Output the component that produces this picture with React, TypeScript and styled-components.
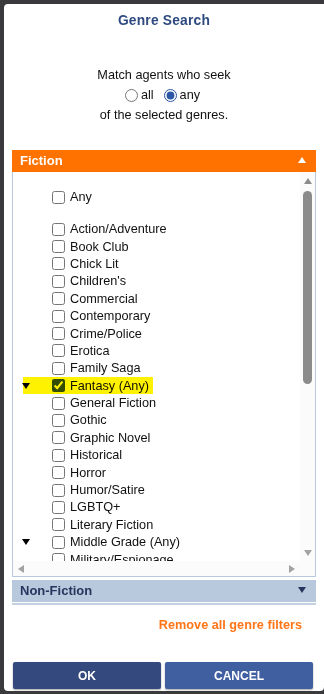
import React from "react";
import styled, { createGlobalStyle } from "styled-components";

const GlobalStyle = createGlobalStyle`
  html, body {
    margin: 0;
    padding: 0;
    background: #3a3a3c;
  }
  body {
    font-family: "Liberation Sans", Arial, sans-serif;
  }
`;

const fictionGenres: { name: string; caret?: boolean; checked?: boolean; marked?: boolean }[] = [
  { name: "Action/Adventure" },
  { name: "Book Club" },
  { name: "Chick Lit" },
  { name: "Children's" },
  { name: "Commercial" },
  { name: "Contemporary" },
  { name: "Crime/Police" },
  { name: "Erotica" },
  { name: "Family Saga" },
  { name: "Fantasy (Any)", caret: true, checked: true, marked: true },
  { name: "General Fiction" },
  { name: "Gothic" },
  { name: "Graphic Novel" },
  { name: "Historical" },
  { name: "Horror" },
  { name: "Humor/Satire" },
  { name: "LGBTQ+" },
  { name: "Literary Fiction" },
  { name: "Middle Grade (Any)", caret: true },
  { name: "Military/Espionage" },
];

const Arrow = ({ dir, color = "#a3a3a3" }: { dir: "up" | "down" | "left" | "right"; color?: string }) => {
  const pts = {
    up: "0,6 4,0 8,6",
    down: "0,0 8,0 4,6",
    left: "6,0 6,8 0,4",
    right: "0,0 6,4 0,8",
  }[dir];
  const vertical = dir === "up" || dir === "down";
  return (
    <svg width={vertical ? 8 : 6} height={vertical ? 6 : 8} viewBox={vertical ? "0 0 8 6" : "0 0 6 8"}>
      <polygon points={pts} fill={color} />
    </svg>
  );
};

const App = () => {
  return (
    <>
      <GlobalStyle />
      <Modal>
        <Title>Genre Search</Title>
        <MatchText>
          <div>Match agents who seek</div>
          <RadioLine>
            <RadioLabel>
              <input type="radio" name="match" /> all
            </RadioLabel>
            <RadioLabel>
              <input type="radio" name="match" defaultChecked /> any
            </RadioLabel>
          </RadioLine>
          <div>of the selected genres.</div>
        </MatchText>

        <PanelHeader $open>
          <span>Fiction</span>
          <Arrow dir="up" color="#ffffff" />
        </PanelHeader>
        <ListBox>
          <ListTop>
            <Viewport>
              <Row>
                <Caret />
                <input type="checkbox" />
                <span>Any</span>
              </Row>
              <Spacer />
              {fictionGenres.map((g) => (
                <Row key={g.name}>
                  {g.marked && <Highlight />}
                  <Caret>{g.caret && <Arrow dir="down" color="#000000" />}</Caret>
                  <input type="checkbox" defaultChecked={g.checked} />
                  <span>{g.name}</span>
                </Row>
              ))}
            </Viewport>
            <VScroll>
              <Arrow dir="up" color="#8c8c8c" />
              <Thumb />
              <Track />
              <Arrow dir="down" />
            </VScroll>
          </ListTop>
          <HScroll>
            <Arrow dir="left" />
            <Track />
            <Arrow dir="right" />
          </HScroll>
        </ListBox>

        <PanelHeader>
          <span>Non-Fiction</span>
          <Arrow dir="down" color="#26365e" />
        </PanelHeader>
        <CollapsedBody />

        <RemoveLink>Remove all genre filters</RemoveLink>

        <Buttons>
          <Button $variant="primary">OK</Button>
          <Button $variant="secondary">CANCEL</Button>
        </Buttons>
      </Modal>
    </>
  );
};

const Modal = styled.div`
  margin: 4px 0 0 4px;
  width: 320px;
  height: 687px;
  box-sizing: border-box;
  background: #ffffff;
  border-radius: 4px 0 4px 4px;
  padding: 7px 8px 0;
  display: flex;
  flex-direction: column;
  color: #111111;
  font-size: 12.7px;
`;

const Title = styled.div`
  text-align: center;
  font-weight: bold;
  font-size: 13.8px;
  line-height: 20px;
  color: #2f4a80;
  letter-spacing: 0.2px;
`;

const MatchText = styled.div`
  margin-top: 34px;
  text-align: center;
  line-height: 20px;
`;

const RadioLine = styled.div`
  display: flex;
  justify-content: center;
  gap: 10px;
  padding-right: 3px;
`;

const RadioLabel = styled.label`
  display: inline-flex;
  align-items: center;
  gap: 3px;

  input {
    margin: 0;
    width: 13px;
    height: 13px;
    accent-color: #2a58a6;
  }
`;

const PanelHeader = styled.div<{ $open?: boolean }>`
  margin-top: ${(p) => (p.$open ? "25px" : "3px")};
  height: 22px;
  display: flex;
  align-items: center;
  justify-content: space-between;
  padding: 0 10px 2px 8px;
  box-sizing: border-box;
  background: ${(p) => (p.$open ? "#ff7200" : "#b8c9dd")};
  color: ${(p) => (p.$open ? "#ffffff" : "#26365e")};
  font-weight: bold;
  font-size: 13px;
`;

const ListBox = styled.div`
  border: 1px solid #b9c9dc;
  border-top: none;
  height: 405px;
  box-sizing: border-box;
  display: flex;
  flex-direction: column;
`;

const ListTop = styled.div`
  flex: 1;
  display: flex;
  min-height: 0;
`;

const Viewport = styled.div`
  flex: 1;
  overflow: hidden;
  padding-top: 16.5px;
`;

const Row = styled.label`
  position: relative;
  display: flex;
  align-items: center;
  height: 17.4px;
  padding-left: 9px;
  white-space: nowrap;

  input {
    margin: 0 5px 0 0;
    width: 13px;
    height: 13px;
    accent-color: #34507e;
  }
  span {
    position: relative;
  }
`;

const Highlight = styled.div`
  position: absolute;
  left: 10px;
  width: 130px;
  top: 0;
  bottom: 0;
  background: #fff200;
  mix-blend-mode: multiply;
  z-index: 1;
`;

const Caret = styled.span`
  width: 30px;
  display: flex;
  align-items: center;
`;

const Spacer = styled.div`
  height: 14.6px;
`;

const VScroll = styled.div`
  width: 15px;
  display: flex;
  flex-direction: column;
  align-items: center;
  padding: 6px 0 5px;
  box-sizing: border-box;
  background: #fbfbfb;
`;

const Thumb = styled.div`
  margin-top: 7px;
  width: 9px;
  height: 193px;
  border-radius: 5px;
  background: #8b8b8b;
`;

const Track = styled.div`
  flex: 1;
`;

const HScroll = styled.div`
  height: 15px;
  display: flex;
  align-items: center;
  padding: 0 20px 0 5px;
  background: #fbfbfb;
`;

const CollapsedBody = styled.div`
  margin-top: 1px;
  border-top: 2px solid #c3d2e3;
`;

const RemoveLink = styled.div`
  margin-top: 12px;
  text-align: right;
  padding-right: 14px;
  color: #ff7518;
  font-weight: bold;
  font-size: 12.7px;
  line-height: 16px;
`;

const Buttons = styled.div`
  margin-top: 29px;
  display: flex;
  gap: 4px;
  padding: 0 3px 0 1px;
`;

const Button = styled.button<{ $variant: "primary" | "secondary" }>`
  flex: 1;
  height: 27px;
  border: none;
  border-radius: 2px;
  background: ${(p) => (p.$variant === "primary" ? "#34497e" : "#405fa0")};
  color: #ffffff;
  font-family: "Liberation Sans", Arial, sans-serif;
  font-weight: bold;
  font-size: 12px;
  box-shadow: 0 1px 2px rgba(0, 0, 0, 0.35);
`;

export default App;
